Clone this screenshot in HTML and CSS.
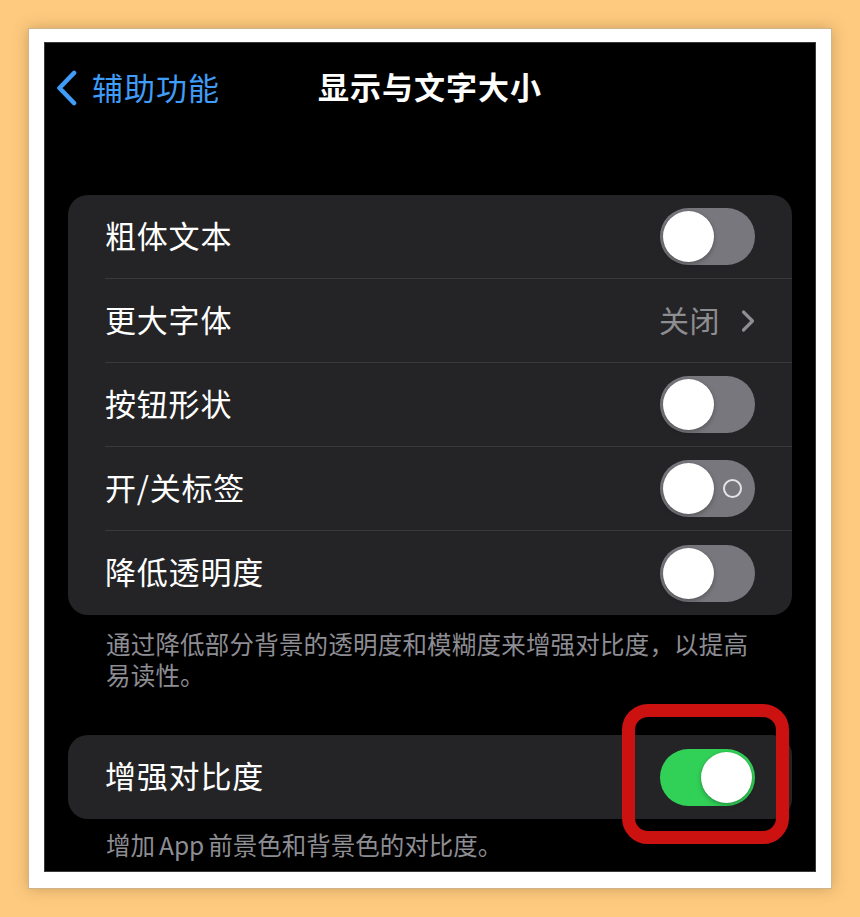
FILE: index.html
```html
<!DOCTYPE html>
<html lang="zh-CN">
<head>
<meta charset="utf-8">
<title>显示与文字大小</title>
<link rel="stylesheet" href="styles.css">
</head>
<body>
<div class="frame">
  <div class="screen">
    <header class="nav">
      <a class="back">
        <svg class="back-chevron" viewBox="0 0 24 36" width="24" height="36">
          <path d="M19 3 L4.5 18 L19 33" fill="none" stroke="#3f9cf7" stroke-width="4.6" stroke-linecap="round" stroke-linejoin="round"/>
        </svg>
        <span class="back-label">辅助功能</span>
      </a>
      <h1 class="nav-title">显示与文字大小</h1>
    </header>

    <section class="group group-first">
      <div class="row">
        <div class="row-body">
          <span class="row-label">粗体文本</span>
          <span class="switch"><span class="knob"></span></span>
        </div>
      </div>
      <div class="row">
        <div class="row-body">
          <span class="row-label">更大字体</span>
          <span class="detail">关闭
            <svg class="detail-chevron" viewBox="0 0 16 24" width="16" height="24">
              <path d="M3.5 3 L12.5 12 L3.5 21" fill="none" stroke="#8d8d92" stroke-width="3.2" stroke-linecap="round" stroke-linejoin="round"/>
            </svg>
          </span>
        </div>
      </div>
      <div class="row">
        <div class="row-body">
          <span class="row-label">按钮形状</span>
          <span class="switch"><span class="knob"></span></span>
        </div>
      </div>
      <div class="row">
        <div class="row-body">
          <span class="row-label">开/关标签</span>
          <span class="switch"><span class="knob"></span><span class="off-mark"></span></span>
        </div>
      </div>
      <div class="row">
        <div class="row-body">
          <span class="row-label">降低透明度</span>
          <span class="switch"><span class="knob"></span></span>
        </div>
      </div>
    </section>
    <p class="footnote">通过降低部分背景的透明度和模糊度来增强对比度，以提高易读性。</p>

    <section class="group group-second">
      <div class="row">
        <div class="row-body">
          <span class="row-label">增强对比度</span>
          <span class="switch on"><span class="knob"></span></span>
        </div>
      </div>
      <span class="highlight"></span>
    </section>
    <p class="footnote footnote-last">增加 App 前景色和背景色的对比度。</p>
  </div>
</div>
</body>
</html>
```

FILE: styles.css
```css
html, body {
  margin: 0;
  padding: 0;
}

body {
  width: 860px;
  height: 917px;
  background: #fdca80;
  font-family: "Noto Sans CJK SC", "Noto Sans", sans-serif;
  overflow: hidden;
}

.frame {
  box-sizing: border-box;
  width: 804px;
  height: 861px;
  margin: 28px 0 0 28px;
  padding: 14px 16px 17px 16px;
  background: #ffffff;
  border: 1px solid #cdb48c;
  box-shadow: 0 0 14px rgba(120, 80, 20, 0.35);
}

.screen {
  box-sizing: border-box;
  position: relative;
  width: 772px;
  height: 830px;
  margin: -1px 0 0 -1px;
  background: #000000;
  border: 1px solid #3a3a3a;
  overflow: hidden;
}

/* navigation bar */
.nav {
  position: relative;
  box-sizing: border-box;
  height: 92px;
  padding-bottom: 6px;
  display: flex;
  align-items: center;
  justify-content: center;
}

.back {
  position: absolute;
  left: 10px;
  top: 26px;
  display: flex;
  align-items: center;
  gap: 13px;
  color: #3f9cf7;
}

.back-chevron {
  display: block;
}

.back-label {
  font-size: 31px;
  line-height: 36px;
  letter-spacing: 1px;
  padding-bottom: 2px;
}

.nav-title {
  margin: 0;
  color: #ffffff;
  font-size: 31px;
  font-weight: 700;
  letter-spacing: 1px;
  line-height: 36px;
}

/* grouped list */
.group {
  position: relative;
  margin: 0 23px;
  background: #242426;
  border-radius: 20px;
}

.group-first {
  margin-top: 60px;
}

.group-second {
  margin-top: 45px;
}

.row {
  padding-left: 37px;
}

.row-body {
  height: 84px;
  box-sizing: border-box;
  display: flex;
  align-items: center;
  justify-content: space-between;
  padding-right: 37px;
  border-bottom: 1px solid #3a3a3c;
}

.row:last-child .row-body,
.group-second .row-body {
  border-bottom: none;
}

.row-label {
  color: #ffffff;
  font-size: 31px;
  letter-spacing: 0.8px;
  line-height: 36px;
  padding-bottom: 4px;
}

.detail {
  display: flex;
  align-items: center;
  gap: 20px;
  color: #8d8d92;
  font-size: 30px;
  letter-spacing: 0.5px;
  line-height: 36px;
  margin-right: -1px;
  padding-bottom: 3px;
}

.detail-chevron {
  display: block;
  margin-top: 4px;
}

/* switches */
.switch {
  position: relative;
  width: 95px;
  height: 57px;
  border-radius: 29px;
  background: #77777d;
  flex: none;
}

.switch .knob {
  position: absolute;
  left: 3px;
  top: 3px;
  width: 51px;
  height: 51px;
  border-radius: 50%;
  background: #ffffff;
  box-shadow: 0 2px 5px rgba(0, 0, 0, 0.28), 0 0 1px rgba(0, 0, 0, 0.2);
}

.switch.on {
  background: #31d158;
}

.switch.on .knob {
  left: 41px;
}

.off-mark {
  position: absolute;
  right: 13px;
  top: 19px;
  width: 15px;
  height: 15px;
  border: 2px solid #e4e4e6;
  border-radius: 50%;
}

/* footers under each group */
.footnote {
  margin: 13px 0 0 0;
  padding: 0 56px 0 61px;
  color: #8d8d93;
  font-size: 24.5px;
  line-height: 31px;
  letter-spacing: 0.2px;
}

.footnote-last {
  margin-top: 10px;
  letter-spacing: 0;
  word-spacing: -1.5px;
}

/* red marker drawn around the contrast switch */
.highlight {
  position: absolute;
  left: 554px;
  top: -31px;
  width: 167px;
  height: 140px;
  box-sizing: border-box;
  border: 13px solid #cc1111;
  border-radius: 26px;
}
```
